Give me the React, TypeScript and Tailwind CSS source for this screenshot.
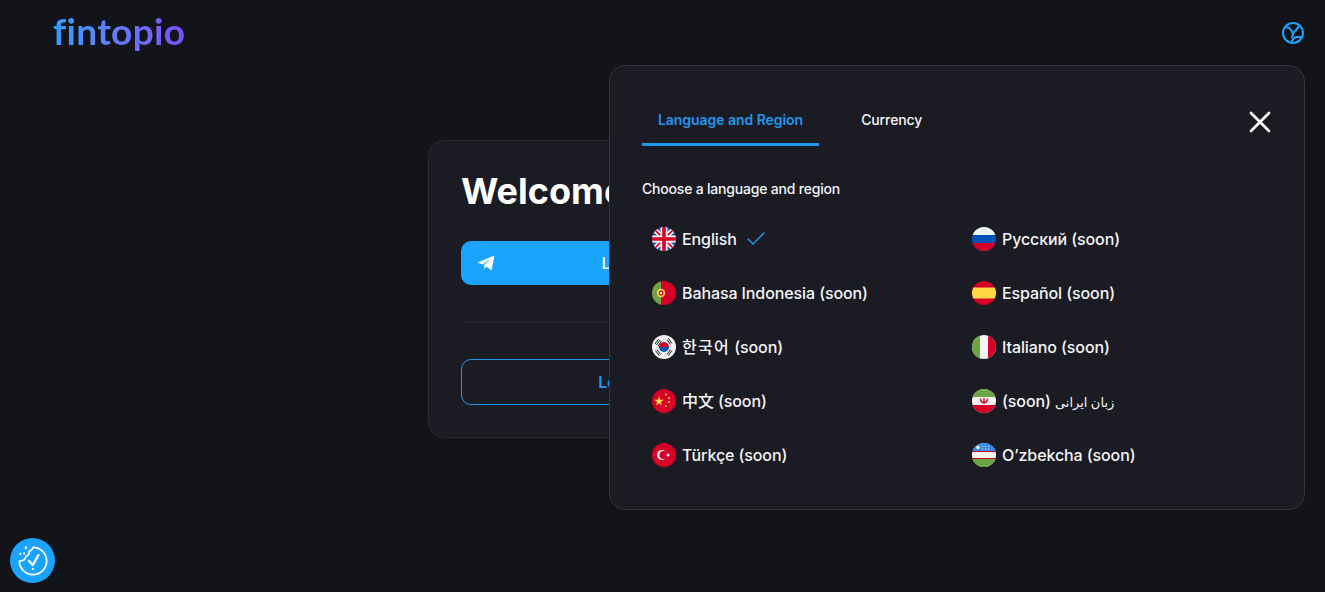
import React from 'react';
import { X, Check } from 'lucide-react';

const FONT = "font-['Inter','Noto_Sans_CJK_KR','DejaVu_Sans',sans-serif]";

function FlagCircle({ children }: { children: React.ReactNode }) {
  return (
    <svg viewBox="0 0 24 24" className="w-6 h-6 shrink-0">
      <defs>
        <clipPath id="flag-circle">
          <circle cx="12" cy="12" r="12" />
        </clipPath>
      </defs>
      <g clipPath="url(#flag-circle)">{children}</g>
    </svg>
  );
}

const Uk = () => (
  <FlagCircle>
    <rect width="24" height="24" fill="#2c55a5" />
    <path d="M0 0L24 24M24 0L0 24" stroke="#f3f3f3" strokeWidth="5" />
    <path d="M0 0L24 24M24 0L0 24" stroke="#d80027" strokeWidth="1.6" />
    <path d="M12 0V24M0 12H24" stroke="#f3f3f3" strokeWidth="7" />
    <path d="M12 0V24M0 12H24" stroke="#d80027" strokeWidth="3.6" />
  </FlagCircle>
);
const Portugal = () => (
  <FlagCircle>
    <rect width="24" height="24" fill="#d80027" />
    <rect width="9" height="24" fill="#6da544" />
    <circle cx="9" cy="12" r="4.2" fill="#ffda44" />
    <rect x="6.8" y="9.6" width="4.4" height="5" rx="1.5" fill="#d80027" />
    <rect x="8" y="11" width="2" height="2.2" fill="#f3f3f3" />
  </FlagCircle>
);
const Korea = () => (
  <FlagCircle>
    <rect width="24" height="24" fill="#f3f3f3" />
    <path d="M7 12a5 5 0 0 1 10 0z" fill="#d80027" />
    <path d="M7 12a5 5 0 0 0 10 0z" fill="#0052b4" />
    <path d="M3 9L6.500 4M4.500 10L8 5M6 11L9.500 6" stroke="#222" strokeWidth="1" />
    <path d="M16.500 3.500L20 8.500M15 4.500L18.500 9.500" stroke="#222" strokeWidth="1" />
    <path d="M3.500 15.500L7 20.500M5 14.500L8.500 19.500" stroke="#222" strokeWidth="1" />
    <path d="M20 15.500L16.500 20.500M18.500 14.500L15 19.500" stroke="#222" strokeWidth="1" />
  </FlagCircle>
);
const China = () => (
  <FlagCircle>
    <rect width="24" height="24" fill="#d80027" />
    <path d="M7 7.200l1.200 3.500h3.600l-2.900 2.200 1.100 3.500L7 14.300l-3 2.100 1.100-3.500-2.900-2.200h3.600z" fill="#ffda44" />
    <circle cx="14" cy="5.500" r="1" fill="#ffda44" />
    <circle cx="17" cy="9" r="1" fill="#ffda44" />
    <circle cx="17" cy="13" r="1" fill="#ffda44" />
    <circle cx="14" cy="17" r="1" fill="#ffda44" />
  </FlagCircle>
);
const Turkey = () => (
  <FlagCircle>
    <rect width="24" height="24" fill="#d80027" />
    <circle cx="10" cy="12" r="5" fill="#f3f3f3" />
    <circle cx="11.500" cy="12" r="4" fill="#d80027" />
    <circle cx="16" cy="12" r="1.500" fill="#f3f3f3" />
  </FlagCircle>
);
const Russia = () => (
  <FlagCircle>
    <rect width="24" height="24" fill="#0052b4" />
    <rect width="24" height="8" fill="#f3f3f3" />
    <rect y="16" width="24" height="8" fill="#d80027" />
  </FlagCircle>
);
const Spain = () => (
  <FlagCircle>
    <rect width="24" height="24" fill="#d80027" />
    <rect y="6.500" width="24" height="11" fill="#ffda44" />
  </FlagCircle>
);
const Italy = () => (
  <FlagCircle>
    <rect width="24" height="24" fill="#f3f3f3" />
    <rect width="8" height="24" fill="#6da544" />
    <rect x="16" width="8" height="24" fill="#d80027" />
  </FlagCircle>
);
const Iran = () => (
  <FlagCircle>
    <rect width="24" height="24" fill="#f3f3f3" />
    <rect width="24" height="8" fill="#6da544" />
    <rect y="16" width="24" height="8" fill="#d80027" />
    <path d="M8.500 9.500c0 3 1.500 4 3.500 4.500 2-.5 3.500-1.500 3.500-4.500M12 9v5.500" fill="none" stroke="#d80027" strokeWidth="1.400" />
  </FlagCircle>
);
const Uzbekistan = () => (
  <FlagCircle>
    <rect width="24" height="24" fill="#f3f3f3" />
    <rect width="24" height="8.500" fill="#338af3" />
    <rect y="16" width="24" height="8" fill="#6da544" />
    <rect y="8" width="24" height="1" fill="#d80027" />
    <rect y="15" width="24" height="1" fill="#d80027" />
    <circle cx="6" cy="4.500" r="1.800" fill="#f3f3f3" />
    <path d="M10 3.500h1M13 3.500h1M16 3.500h1M10 6h1M13 6h1M16 6h1" stroke="#f3f3f3" strokeWidth="1" />
  </FlagCircle>
);

const languages: { label: React.ReactNode; flag: React.ReactNode; checked?: boolean }[] = [
  { label: 'English', flag: <Uk />, checked: true },
  { label: 'Русский (soon)', flag: <Russia /> },
  { label: 'Bahasa Indonesia (soon)', flag: <Portugal /> },
  { label: 'Español (soon)', flag: <Spain /> },
  { label: <><span className="tracking-[1.3px]">한국어</span> (soon)</>, flag: <Korea /> },
  { label: 'Italiano (soon)', flag: <Italy /> },
  { label: '中文 (soon)', flag: <China /> },
  { label: <>(soon) <span className="text-[13px]">زبان ایرانی</span></>, flag: <Iran /> },
  { label: 'Türkçe (soon)', flag: <Turkey /> },
  { label: 'O’zbekcha (soon)', flag: <Uzbekistan /> },
];

function RegionIcon() {
  return (
    <svg viewBox="0 0 24 24" fill="none" stroke="#1aa3ff" strokeWidth="2" strokeLinecap="round" strokeLinejoin="round" className="w-6 h-6">
      <circle cx="12" cy="12" r="10" />
      <path d="M6 6.500c2 0 3 .8 4 2.500l2 3.500c1.500-2 4-3.500 5.500-7" />
      <path d="M11 21c0-3 3-5.500 6-5h4" />
      <path d="M12 12.500l-1 4" />
    </svg>
  );
}

function CookieIcon() {
  return (
    <svg viewBox="0 0 34 34" fill="none" stroke="#fff" strokeWidth="1.800" strokeLinecap="round" strokeLinejoin="round" className="w-8 h-8">
      <path d="M17 2.500A14.500 14.500 0 1 1 2.500 17C6 17 9 15 9.500 12C12 11.500 13.500 9 13 6.500C15 6 16.500 4.500 17 2.500z" />
      <path d="M12.800 17l4 4.200 6-10.500" strokeWidth="2.400" />
      <circle cx="16.800" cy="25.500" r="1.200" fill="#fff" stroke="none" />
      <circle cx="9.500" cy="2.800" r="1.400" fill="#fff" stroke="none" />
      <circle cx="3.500" cy="9.500" r="1.200" fill="#fff" stroke="none" />
      <circle cx="7.500" cy="9" r="1.200" fill="#fff" stroke="none" />
    </svg>
  );
}

function LanguagePopup() {
  return (
    <div className="absolute left-[609px] top-[65px] w-[696px] h-[445px] rounded-2xl border border-[#33343e] bg-[#1b1b23] px-8 pt-[29px]">
      <div className="flex items-start justify-between">
        <div className="flex gap-[26px]">
          <div className="h-[51px] pt-0.5 px-4 flex items-center border-b-[3px] border-[#1f97ef] text-sm font-semibold text-[#1f97ef] tracking-[-0.05px]">
            Language and Region
          </div>
          <div className="h-[51px] pt-0.5 px-4 flex items-center text-sm font-medium text-[#f4f4f6] border-b-[3px] border-transparent tracking-[-0.1px]">
            Currency
          </div>
        </div>
        <X className="w-9 h-9 text-white mt-[9px] mr-[-6px]" strokeWidth={1.8} />
      </div>
      <p className="mt-[33px] text-sm font-medium leading-5 text-[#f4f4f6] tracking-[-0.2px]">Choose a language and region</p>
      <div className="mt-[13px] grid grid-cols-[320px_1fr] pl-2.5">
        {languages.map((lang, i) => (
          <div key={i} className="h-[54px] flex items-center gap-1.5 text-base font-[450] tracking-[-0.1px] text-[#f4f4f6]">
            {lang.flag}
            <span>{lang.label}</span>
            {lang.checked && <Check className="w-6 h-6 text-[#1f97ef] ml-px" strokeWidth={1.5} />}
          </div>
        ))}
      </div>
    </div>
  );
}

export default function App() {
  return (
    <div className={`relative h-[592px] overflow-hidden bg-[#13141a] ${FONT}`}>
      <header className="h-[65px] flex items-center justify-between pl-[53px] pr-5">
        <span className="bg-gradient-to-r from-[#2d9dff] to-[#7b4dff] bg-clip-text text-transparent text-[37px] leading-none font-bold tracking-[0.3px] font-['Lato',sans-serif] pb-1">
          fintopio
        </span>
        <RegionIcon />
      </header>

      <main className="flex justify-center pt-[75px]">
        <div className="w-[469px] h-[298px] rounded-2xl border border-[#2a2a33] bg-[#1b1b23] px-8 pt-[26px]">
          <h1 className="text-4xl font-bold leading-[48px] text-white">Welcome to Fintopio</h1>
          <button className="relative mt-[26px] w-full h-11 rounded-[10px] bg-[#1aa3ff] text-base font-medium text-white">
            <svg viewBox="0 0 18 16" className="absolute left-4 top-[14px] w-[18px] h-4" fill="#fff">
              <path d="M0.500 7.500L17.500 0.500L14.500 15.500L9.500 11.500L7.500 14L7 10L14 3.500L5.500 9.500z" />
            </svg>
            Log in Telegram
          </button>
          <div className="mt-[37px] h-px bg-[#2a2a33]" />
          <button className="mt-9 w-full h-[46px] rounded-[10px] border border-[#1f97ef] text-base font-semibold tracking-[-0.3px] text-[#1f97ef]">
            Log in with wallet
          </button>
        </div>
      </main>

      <LanguagePopup />

      <button className="absolute left-2.5 bottom-[9px] w-[45px] h-[45px] rounded-full bg-[#1aa3ff] flex items-center justify-center">
        <CookieIcon />
      </button>
    </div>
  );
}
